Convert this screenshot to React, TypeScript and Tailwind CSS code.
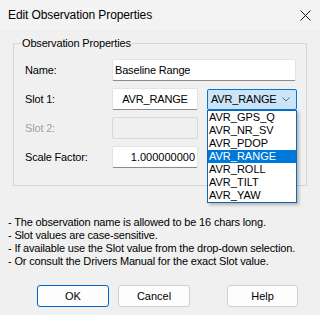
import React from "react";

const items = ["AVR_GPS_Q", "AVR_NR_SV", "AVR_PDOP", "AVR_RANGE", "AVR_ROLL", "AVR_TILT", "AVR_YAW"];

export default function App() {
  return (
    <div
      className="w-[320px] h-[315px] bg-[#f0f0f0] text-black overflow-hidden flex flex-col"
      style={{ fontFamily: '"Liberation Sans", Arial, sans-serif' }}
    >
      {/* Title bar */}
      <div className="h-[30px] flex items-center justify-between pl-[8px] pr-[9px] bg-[#f3f3f3]">
        <span className="text-[12px] leading-[14px] tracking-[-0.1px]">Edit Observation Properties</span>
        <svg width="11" height="11" viewBox="0 0 11 11" className="text-[#1a1a1a]">
          <path d="M0.5 0.5 L10.5 10.5 M10.5 0.5 L0.5 10.5" stroke="currentColor" strokeWidth="1" fill="none" />
        </svg>
      </div>

      {/* Group box */}
      <div className="relative mt-[13px] ml-[13px] w-[294px] h-[143px] border border-[#d6d6d6] text-[11px] leading-[13px] tracking-[-0.17px]">
        <span className="absolute left-[7px] top-[-7px] px-[1px] bg-[#f0f0f0]">Observation Properties</span>
        <div className="flex flex-col gap-[7px] pt-[15px] pl-[11px]">
          <div className="flex items-center">
            <span className="w-[87px]">Name:</span>
            <div className="w-[184px] h-[22px] bg-white border border-[#e3e3e3] border-b-[#8b8b8b] rounded-[2px] flex items-center pl-[2px]">
              Baseline Range
            </div>
          </div>
          <div className="flex items-center">
            <span className="w-[87px]">Slot 1:</span>
            <div className="w-[86px] h-[22px] bg-white border border-[#e3e3e3] border-b-[#8b8b8b] rounded-[2px] flex items-center justify-center">
              AVR_RANGE
            </div>
            <div className="relative ml-[9px] w-[90px] h-[21px]">
              <div className="w-full h-full bg-[#cce4f7] border border-[#0078d7] rounded-[2px] flex items-center justify-between pl-[3px] pr-[6px]">
                <span>AVR_RANGE</span>
                <svg width="8" height="5" viewBox="0 0 8 5">
                  <path d="M0.5 0.5 L4 4 L7.5 0.5" stroke="#6a6a6a" strokeWidth="1" fill="none" />
                </svg>
              </div>
              <div className="absolute z-10 left-0 top-[21px] w-[90px] bg-white border border-[#0f68b4] shadow-[2px_2px_3px_rgba(0,0,0,0.25)] tracking-normal">
                {items.map((it) => (
                  <div
                    key={it}
                    className={
                      "h-[13px] leading-[13px] pl-[1px] " +
                      (it === "AVR_RANGE" ? "bg-[#0078d7] text-white" : "")
                    }
                  >
                    {it}
                  </div>
                ))}
              </div>
            </div>
          </div>
          <div className="flex items-center">
            <span className="w-[87px] text-[#a0a0a0]">Slot 2:</span>
            <div className="w-[86px] h-[22px] bg-[#f0f0f0] border border-[#d9d9d9] rounded-[2px]"></div>
          </div>
          <div className="flex items-center">
            <span className="w-[87px]">Scale Factor:</span>
            <div className="w-[86px] h-[22px] bg-white border border-[#e3e3e3] border-b-[#8b8b8b] rounded-[2px] flex items-center justify-end pr-[2px] tracking-normal">
              1.000000000
            </div>
          </div>
        </div>
      </div>

      {/* Notes */}
      <div className="mt-[30px] pl-[8px] text-[11px] leading-[13px] tracking-[-0.17px]">
        <div>- The observation name is allowed to be 16 chars long.</div>
        <div>- Slot values are case-sensitive.</div>
        <div>- If available use the Slot value from the drop-down selection.</div>
        <div>- Or consult the Drivers Manual for the exact Slot value.</div>
      </div>

      {/* Buttons */}
      <div className="mt-[17px] flex items-center pl-[37px] text-[11px]">
        <button className="w-[72px] h-[22px] bg-[#fdfdfd] border border-[#0067c0] rounded-[3px]">OK</button>
        <button className="ml-[9px] w-[72px] h-[22px] bg-[#fdfdfd] border border-[#d0d0d0] rounded-[3px]">Cancel</button>
        <button className="ml-[37px] w-[71px] h-[22px] bg-[#fdfdfd] border border-[#d0d0d0] rounded-[3px]">Help</button>
      </div>
    </div>
  );
}
